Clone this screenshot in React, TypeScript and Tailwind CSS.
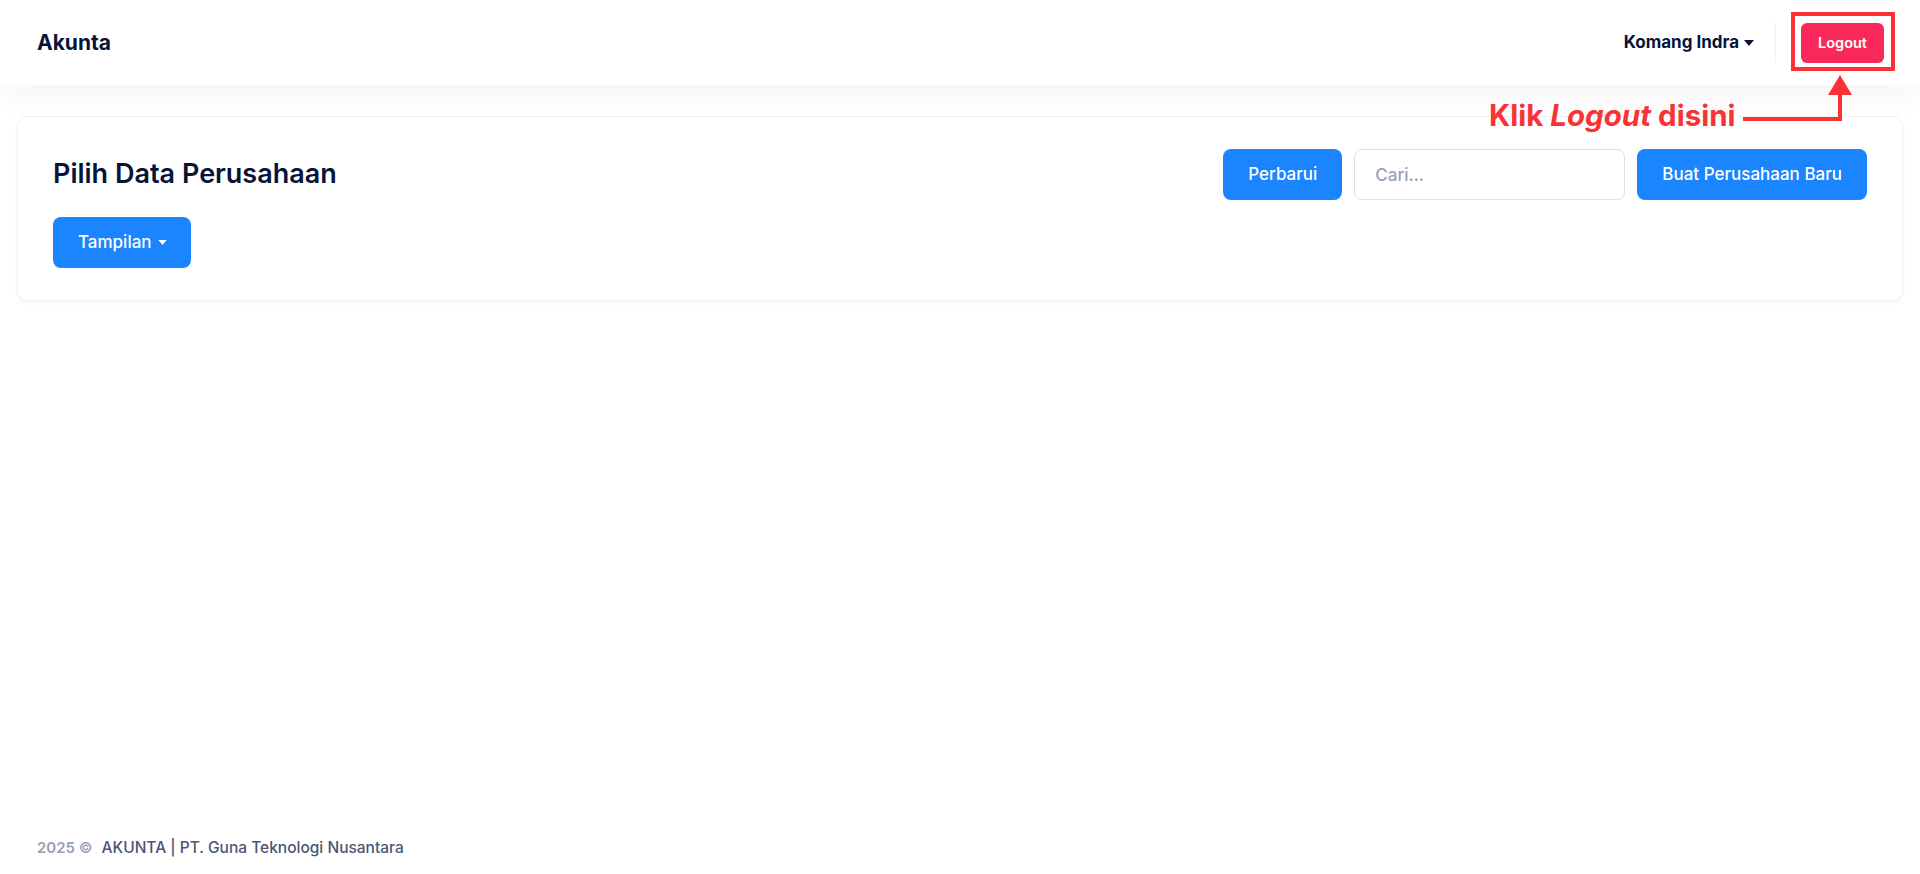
import { useState } from "react";

const FONT = "font-['Inter','Noto_Sans',sans-serif]";

function Caret({ className = "" }: { className?: string }) {
  return (
    <svg
      viewBox="0 0 10 6"
      className={className}
      fill="currentColor"
      aria-hidden="true"
    >
      <path d="M0 0h10L5 6z" />
    </svg>
  );
}

// Red callout pointing at the logout button
function LogoutHint() {
  return (
    <div className="pointer-events-none absolute inset-0">
      <div className="absolute left-[1791px] top-[12px] h-[59px] w-[104px] border-[4px] border-[#fa3236]" />
      <svg
        className="absolute left-0 top-0"
        width="1920"
        height="140"
        viewBox="0 0 1920 140"
      >
        <polyline
          points="1743,119 1840,119 1840,92"
          fill="none"
          stroke="#fa3236"
          strokeWidth="4"
        />
        <polygon points="1828,95 1852,95 1840,75" fill="#fa3236" />
      </svg>
      <div className="absolute left-[1489px] top-[97px] text-[29.5px] font-bold leading-[36px] text-[#fa3236]">
        Klik <span className="italic">Logout</span> disini
      </div>
    </div>
  );
}

export default function App() {
  const [query, setQuery] = useState("");

  return (
    <div className={`${FONT} relative flex min-h-screen flex-col bg-white`}>
      <header className="flex h-[85px] items-center justify-between bg-white pl-[37px] pr-[36px] shadow-[0_10px_30px_0_rgba(82,63,105,0.05)]">
        <div className="text-[21px] font-bold text-[#071437]">Akunta</div>
        <div className="flex items-center">
          <button className="flex items-center gap-[5px] text-[17px] font-bold text-[#071437]">
            Komang Indra
            <Caret className="h-[6px] w-[10px]" />
          </button>
          <div className="ml-[21px] mr-[25px] h-[40px] w-px bg-[#f1f1f4]" />
          <button className="h-[40px] rounded-[6px] bg-[#f8285a] px-[17px] text-[14.5px] font-semibold text-white">
            Logout
          </button>
        </div>
      </header>

      <main className="flex-1 px-[17px] pt-[31px]">
        <div className="flex flex-col gap-[17px] rounded-[10px] border border-[#f1f1f4] bg-white px-[35px] py-[32px] shadow-[0_3px_4px_0_rgba(0,0,0,0.03)]">
          <div className="flex items-center justify-between">
            <h1 className="text-[27px] font-semibold text-[#071437]">
              Pilih Data Perusahaan
            </h1>
            <div className="flex items-center gap-[12px]">
              <button className="h-[51px] rounded-[8px] bg-[#1b84ff] px-[25px] text-[17px] font-medium text-white">
                Perbarui
              </button>
              <input
                value={query}
                onChange={(e) => setQuery(e.target.value)}
                placeholder="Cari..."
                className="h-[51px] w-[271px] rounded-[8px] border border-[#dbdfe9] bg-white px-[20px] text-[17px] font-medium text-[#071437] outline-none placeholder:text-[#99a1b7]"
              />
              <button className="h-[51px] rounded-[8px] bg-[#1b84ff] px-[25px] text-[17px] font-medium text-white">
                Buat Perusahaan Baru
              </button>
            </div>
          </div>
          <div>
            <button className="flex h-[51px] items-center gap-[6px] rounded-[8px] bg-[#1b84ff] pl-[25px] pr-[24px] text-[17px] font-medium text-white">
              Tampilan
              <Caret className="h-[5px] w-[9px]" />
            </button>
          </div>
        </div>
      </main>

      <footer className="flex h-[52px] items-center px-[37px]">
        <span className="text-[15px] font-semibold text-[#99a1b7]">2025 ©</span>
        <span className="ml-[9px] text-[15.5px] font-medium text-[#4b5675]">
          AKUNTA | PT. Guna Teknologi Nusantara
        </span>
      </footer>

      <LogoutHint />
    </div>
  );
}
